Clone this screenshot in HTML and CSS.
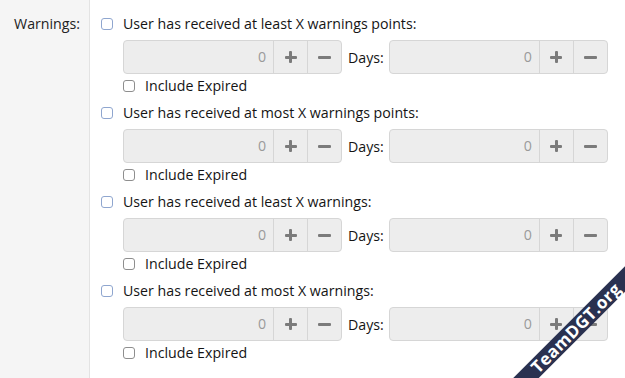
FILE: index.html
```html
<!DOCTYPE html>
<html>
<head>
<meta charset="utf-8">
<link rel="stylesheet" href="styles.css">
</head>
<body>
<div class="page">
  <div class="label-col">Warnings:</div>
  <div class="content-col">
    <div class="opt">
      <label class="head"><span class="cb cb-blue"></span>User has received at least X warnings points:</label>
      <div class="inputs">
        <div class="spin"><div class="num">0</div><div class="btn"><span class="plus"></span></div><div class="btn"><span class="minus"></span></div></div>
        <span class="days">Days:</span>
        <div class="spin"><div class="num">0</div><div class="btn"><span class="plus"></span></div><div class="btn"><span class="minus"></span></div></div>
      </div>
      <label class="sub"><span class="cb cb-gray"></span>Include Expired</label>
    </div>
    <div class="opt">
      <label class="head"><span class="cb cb-blue"></span>User has received at most X warnings points:</label>
      <div class="inputs">
        <div class="spin"><div class="num">0</div><div class="btn"><span class="plus"></span></div><div class="btn"><span class="minus"></span></div></div>
        <span class="days">Days:</span>
        <div class="spin"><div class="num">0</div><div class="btn"><span class="plus"></span></div><div class="btn"><span class="minus"></span></div></div>
      </div>
      <label class="sub"><span class="cb cb-gray"></span>Include Expired</label>
    </div>
    <div class="opt">
      <label class="head"><span class="cb cb-blue"></span>User has received at least X warnings:</label>
      <div class="inputs">
        <div class="spin"><div class="num">0</div><div class="btn"><span class="plus"></span></div><div class="btn"><span class="minus"></span></div></div>
        <span class="days">Days:</span>
        <div class="spin"><div class="num">0</div><div class="btn"><span class="plus"></span></div><div class="btn"><span class="minus"></span></div></div>
      </div>
      <label class="sub"><span class="cb cb-gray"></span>Include Expired</label>
    </div>
    <div class="opt">
      <label class="head"><span class="cb cb-blue"></span>User has received at most X warnings:</label>
      <div class="inputs">
        <div class="spin"><div class="num">0</div><div class="btn"><span class="plus"></span></div><div class="btn"><span class="minus"></span></div></div>
        <span class="days">Days:</span>
        <div class="spin"><div class="num">0</div><div class="btn"><span class="plus"></span></div><div class="btn"><span class="minus"></span></div></div>
      </div>
      <label class="sub"><span class="cb cb-gray"></span>Include Expired</label>
    </div>
  </div>
</div>
<div class="ribbon">TeamDGT.org</div>
</body>
</html>
```
FILE: styles.css
```css
html, body {
  margin: 0;
  padding: 0;
}
body {
  width: 625px;
  height: 378px;
  overflow: hidden;
  position: relative;
  background: #fff;
  font-family: "Open Sans", "Noto Sans", sans-serif;
  font-size: 14.2px;
  color: #141414;
}
.page {
  display: flex;
  height: 378px;
  overflow: hidden;
}
.label-col {
  width: 80px;
  padding-right: 9px;
  background: #f5f5f5;
  border-right: 1px solid #e3e3e3;
  text-align: right;
  padding-top: 14px;
  line-height: 20px;
  color: #222;
  flex: none;
}
.content-col {
  padding-left: 11px;
  padding-top: 14px;
  display: flex;
  flex-direction: column;
  gap: 7px;
}
.opt {
  display: flex;
  flex-direction: column;
}
.head, .sub {
  display: flex;
  align-items: center;
  height: 20px;
  line-height: 20px;
  white-space: nowrap;
}
.cb {
  width: 10px;
  height: 10px;
  border-radius: 3px;
  background: #fff;
  margin-right: 10px;
  flex: none;
}
.cb-blue { border: 1.5px solid #8fa6cf; }
.cb-gray { border: 1.5px solid #8e8e8e; }
.inputs {
  display: flex;
  align-items: center;
  margin-left: 22px;
  margin-top: 6px;
  margin-bottom: 2px;
}
.sub { margin-left: 22px; }
.spin {
  display: flex;
  width: 217px;
  height: 32px;
  border: 1px solid #d6d6d6;
  border-radius: 4px;
  background: #ededed;
}
.num {
  flex: 1;
  text-align: right;
  padding-right: 7px;
  line-height: 32px;
  color: #9a9a9a;
}
.btn {
  width: 33px;
  border-left: 1px solid #d6d6d6;
  display: flex;
  align-items: center;
  justify-content: center;
}
.plus {
  position: relative;
  width: 12px;
  height: 12px;
}
.plus::before, .plus::after {
  content: "";
  position: absolute;
  background: #7b7b7b;
  border-radius: 1px;
}
.plus::before { left: 0; top: 4.5px; width: 12px; height: 3px; }
.plus::after { left: 4.5px; top: 0; width: 3px; height: 12px; }
.minus {
  width: 13px;
  height: 3px;
  background: #7b7b7b;
  border-radius: 1px;
}
.days {
  margin: 0 5px 0 6px;
}
.ribbon {
  position: absolute;
  left: 456px;
  top: 319px;
  width: 240px;
  height: 18px;
  background: #2a3150;
  color: #fff;
  font-family: "Open Sans", sans-serif;
  font-weight: 700;
  font-size: 17px;
  line-height: 18px;
  text-align: center;
  transform: rotate(-45deg);
  letter-spacing: 0.4px;
}
```
